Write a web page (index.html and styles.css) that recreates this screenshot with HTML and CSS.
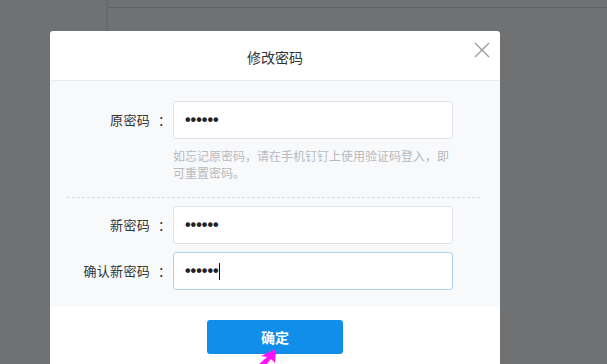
FILE: index.html
```html
<!DOCTYPE html>
<html lang="zh-CN">
<head>
<meta charset="utf-8">
<title>修改密码</title>
<link rel="stylesheet" href="styles.css">
</head>
<body>
<div class="page">
  <aside class="sidebar"></aside>
  <main class="main">
    <div class="topbar"></div>
  </main>
</div>

<div class="modal">
  <div class="modal-header">
    <h2 class="modal-title">修改密码</h2>
    <button class="close" aria-label="关闭">
      <svg width="16" height="16" viewBox="0 0 16 16"><path d="M1 1 L15 15 M15 1 L1 15" stroke="#9a9a9a" stroke-width="1.3" fill="none"/></svg>
    </button>
  </div>
  <div class="modal-body">
    <div class="row">
      <label class="label">原密码<span class="colon">：</span></label>
      <div class="field-col">
        <div class="field"><span class="dots">••••••</span></div>
        <p class="hint">如忘记原密码，请在手机钉钉上使用验证码登入，即可重置密码。</p>
      </div>
    </div>
    <div class="divider"></div>
    <div class="row">
      <label class="label">新密码<span class="colon">：</span></label>
      <div class="field"><span class="dots">••••••</span></div>
    </div>
    <div class="row row-gap">
      <label class="label">确认新密码<span class="colon">：</span></label>
      <div class="field field-focus"><span class="dots">••••••</span><span class="caret"></span></div>
    </div>
  </div>
  <div class="modal-footer">
    <button class="btn-primary">确定</button>
  </div>
</div>

<svg class="pointer" width="30" height="18" viewBox="0 0 30 18"><polygon points="19,0 4,7 10,8 0,17 8,17 14,10 18,14" fill="#ff10ff"/></svg>
</body>
</html>
```
FILE: styles.css
```css
* { box-sizing: border-box; }
html, body { margin: 0; padding: 0; }
body {
  width: 607px;
  height: 364px;
  overflow: hidden;
  background: #707173;
  font-family: "Noto Sans CJK SC", "Liberation Sans", sans-serif;
  position: relative;
}
.page { display: flex; height: 364px; }
.sidebar { width: 108px; border-right: 2px solid #67686a; }
.main { flex: 1; }
.topbar { height: 8px; border-bottom: 1px solid #636466; }

.modal {
  position: absolute;
  left: 50px;
  top: 31px;
  width: 450px;
  height: 360px;
  background: #fff;
  border-radius: 3px;
  display: flex;
  flex-direction: column;
}
.modal-header {
  height: 50px;
  border-bottom: 1px solid #e9eaec;
  display: flex;
  align-items: center;
  justify-content: center;
  position: relative;
}
.modal-title {
  margin: 0;
  font-size: 14px;
  font-weight: normal;
  color: #333;
  padding-top: 2px;
}
.close {
  position: absolute;
  right: 10px;
  top: 11px;
  border: 0;
  background: none;
  padding: 0;
  width: 16px;
  height: 16px;
}
.close svg { display: block; }

.modal-body {
  background: #f8f9fb;
  padding: 20px 17px 17px 17px;
}
.row { display: flex; align-items: flex-start; }
.row-gap { margin-top: 8px; }
.label {
  width: 98px;
  text-align: right;
  font-size: 13px;
  color: #333;
  line-height: 38px;
  margin-right: 8px;
  letter-spacing: 0.3px;
  white-space: nowrap;
}
.colon {
  display: inline-block;
  width: 15px;
  text-indent: 8px;
  text-align: left;
  overflow: visible;
  letter-spacing: 0;
}
.field-col { display: flex; flex-direction: column; width: 280px; }
.field {
  width: 280px;
  height: 38px;
  background: #fff;
  border: 1px solid #e1e3e6;
  border-radius: 3px;
  display: flex;
  align-items: center;
  padding-left: 11px;
}
.field-focus { border-color: #a9d3ee; }
.dots {
  font-family: "Liberation Sans", sans-serif;
  font-size: 16px;
  font-weight: bold;
  color: #222;
}
.caret {
  width: 1px;
  height: 17px;
  background: #111;
  margin-left: 0;
}
.hint {
  margin: 8px 0 0 0;
  font-size: 12px;
  line-height: 17px;
  color: #b8babd;
}
.divider {
  border-top: 1px dashed #dadcdf;
  margin: 16px 3px 8px 0;
}

.modal-footer {
  flex: 1;
  display: flex;
  justify-content: center;
  padding-top: 13px;
}
.btn-primary {
  width: 136px;
  height: 34px;
  border: 0;
  border-radius: 3px;
  background: #108ee9;
  color: #fff;
  font-family: "Noto Sans CJK SC", sans-serif;
  font-size: 14px;
  font-weight: bold;
}

.pointer {
  position: absolute;
  left: 257px;
  top: 349px;
}
```
